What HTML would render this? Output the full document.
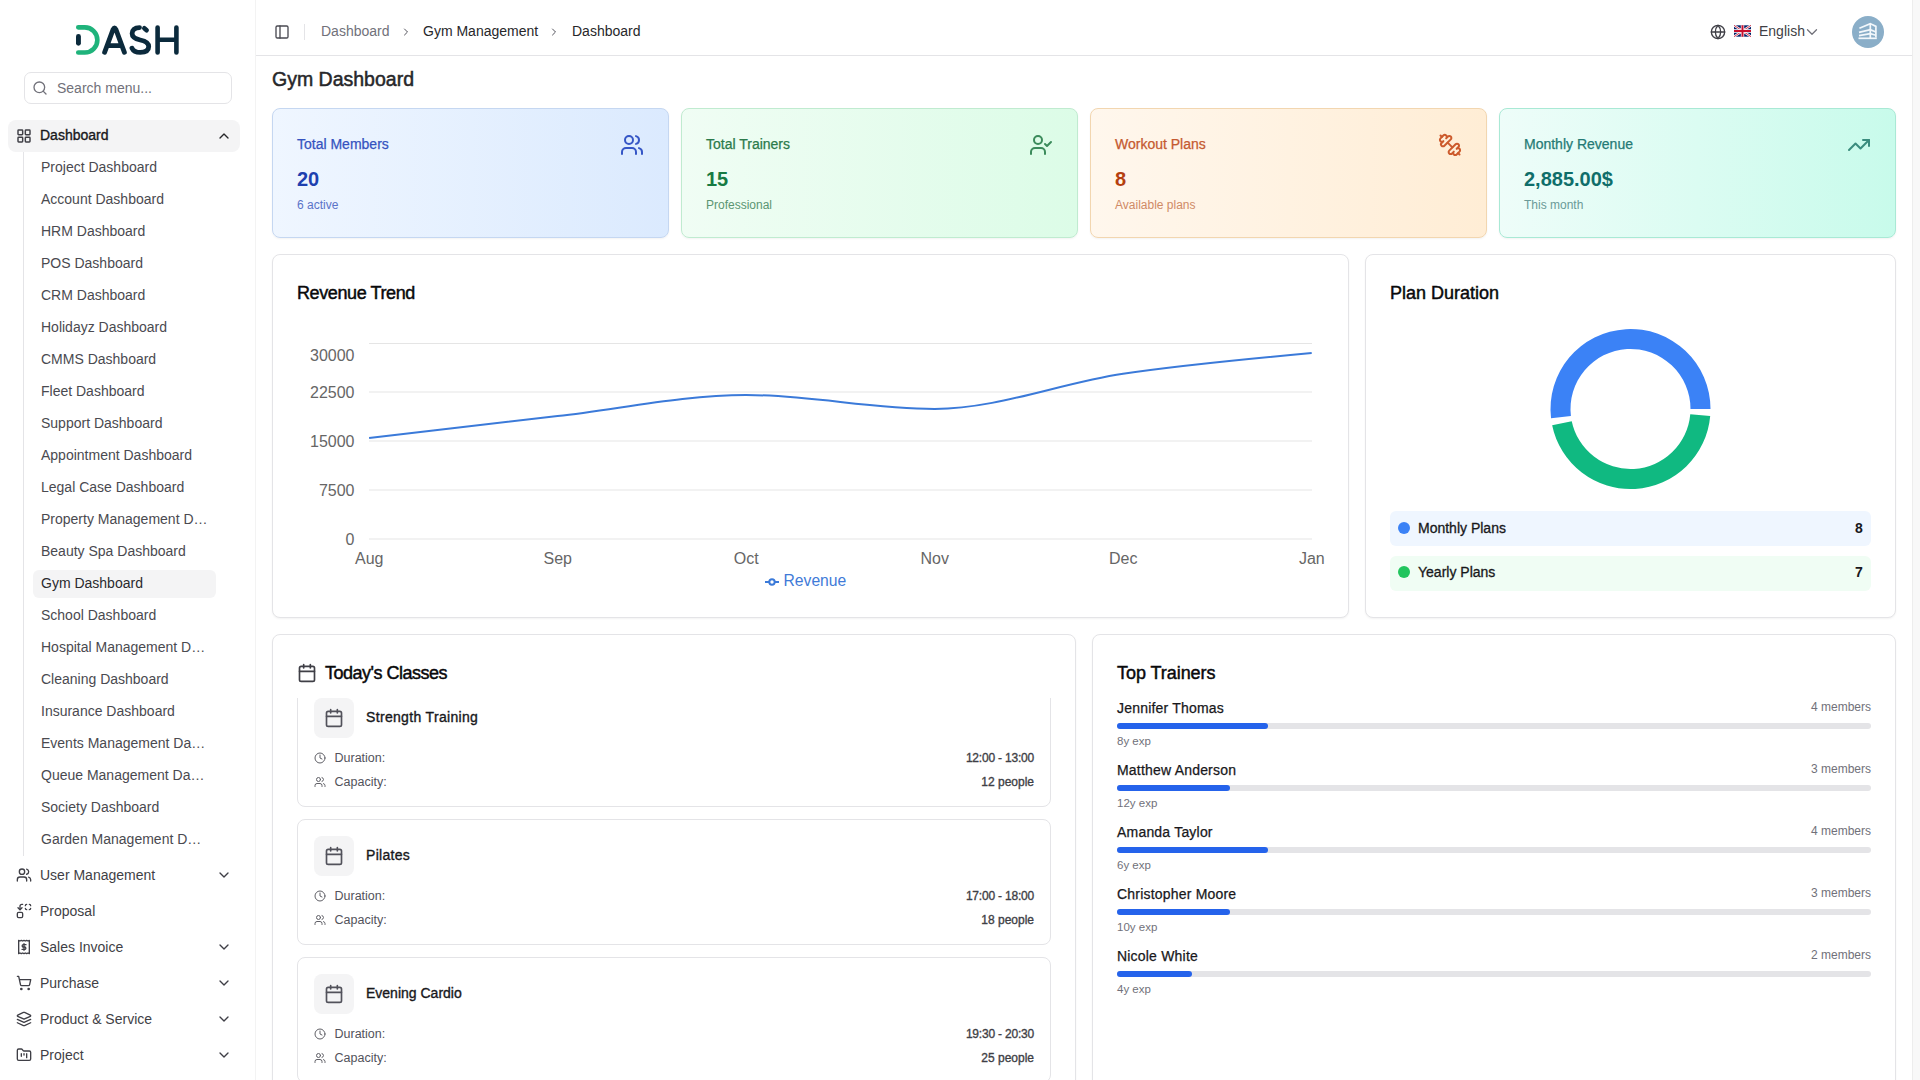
<!DOCTYPE html>
<html>
<head>
<meta charset="utf-8">
<style>
*{box-sizing:border-box;margin:0;padding:0}
html,body{width:1920px;height:1080px;overflow:hidden;background:#f8f8f8;font-family:"Liberation Sans",sans-serif;color:#27272a}
.abs{position:absolute}
svg{display:block}
#sidebar{position:absolute;left:0;top:0;width:255px;height:1080px;background:#ffffff}
#main{position:absolute;left:256px;top:0;width:1656px;height:1080px;background:#ffffff;overflow:hidden;box-shadow:1px 0 0 #ededed,-1px 0 0 #f3f3f3}
.sub{position:absolute;left:41px;font-size:14px;color:#4a4a50;line-height:16px;white-space:nowrap}
.nav{position:absolute;left:16px;width:216px;height:20px}
.nav .ic{position:absolute;left:0;top:2px}
.nav .tx{position:absolute;left:24px;top:2px;font-size:14px;color:#3f3f46;line-height:16px;white-space:nowrap}
.nav .chev{position:absolute;left:203px;top:4px}
</style>
</head>
<body>
<div id="sidebar">
  <!-- logo -->
  <svg class="abs" style="left:70px;top:20px" width="115" height="40" viewBox="0 0 115 40">
    <path d="M8.25,7.35 L14.8,7.35 A12.55,12.55 0 0 1 14.8,32.45 L8.25,32.45" fill="none" stroke="#1fb37b" stroke-width="4.6" stroke-linecap="round"/>
    <rect x="6" y="14" width="4.9" height="11.7" rx="2.45" fill="#0b2a3c"/>
    <path d="M34.6,32.3 L43.2,9.2 Q44.5,6.5 45.8,9.2 L54.4,32.3 M37.4,25.6 L51.6,25.6" fill="none" stroke="#0b2a3c" stroke-width="4.8" stroke-linecap="round" stroke-linejoin="round"/>
    <path d="M69.5,7.6 C64.5,7.6 62.1,10.2 62.1,13.6 C62.1,17.6 65.5,19 70.2,20 C75.2,21 78.7,22.6 78.7,26.6 C78.7,30.6 75.2,32.4 70.2,32.4 C66.2,32.4 63.2,30.8 62,28.2" fill="none" stroke="#0b2a3c" stroke-width="4.8" stroke-linecap="round"/>
    <path d="M74.3,8.2 L76.6,10.2" fill="none" stroke="#0b2a3c" stroke-width="4.6" stroke-linecap="round"/>
    <path d="M87.6,7.5 L87.6,32.4 M106.4,7.5 L106.4,32.4 M87.6,19.7 L106.4,19.7" fill="none" stroke="#0b2a3c" stroke-width="4.6" stroke-linecap="round"/>
  </svg>
  <!-- search -->
  <div class="abs" style="left:24px;top:72px;width:208px;height:32px;border:1px solid #e4e4e7;border-radius:7px;background:#fff"></div>
  <svg class="abs" style="left:32px;top:80px" width="16" height="16" viewBox="0 0 24 24" fill="none" stroke="#71717a" stroke-width="2" stroke-linecap="round"><circle cx="11" cy="11" r="8"/><path d="m21 21-4.3-4.3"/></svg>
  <div class="abs" style="left:57px;top:80px;font-size:14px;color:#71717a;line-height:16px">Search menu...</div>
  <!-- active dashboard -->
  <div class="abs" style="left:8px;top:120px;width:232px;height:32px;background:#f4f4f5;border-radius:8px"></div>
  <svg class="abs" style="left:16px;top:128px" width="16" height="16" viewBox="0 0 24 24" fill="none" stroke="#3f3f46" stroke-width="2.2" stroke-linejoin="round"><rect x="3" y="3" width="7" height="7" rx="1"/><rect x="14" y="3" width="7" height="7" rx="1"/><rect x="14" y="14" width="7" height="7" rx="1"/><rect x="3" y="14" width="7" height="7" rx="1"/></svg>
  <div class="abs" style="left:40px;top:127px;font-size:14px;color:#18181b;line-height:16px;-webkit-text-stroke:0.35px #18181b">Dashboard</div>
  <svg class="abs" style="left:216px;top:128px" width="16" height="16" viewBox="0 0 24 24" fill="none" stroke="#27272a" stroke-width="2" stroke-linecap="round" stroke-linejoin="round"><path d="m18 15-6-6-6 6"/></svg>
  <!-- tree line -->
  <div class="abs" style="left:23px;top:152px;width:1px;height:704px;background:#e4e4e7"></div>
  <!-- active gym -->
  <div class="abs" style="left:33px;top:570px;width:183px;height:28px;background:#f4f4f5;border-radius:6px"></div>
  <div class="sub" style="top:159px">Project Dashboard</div>
  <div class="sub" style="top:191px">Account Dashboard</div>
  <div class="sub" style="top:223px">HRM Dashboard</div>
  <div class="sub" style="top:255px">POS Dashboard</div>
  <div class="sub" style="top:287px">CRM Dashboard</div>
  <div class="sub" style="top:319px">Holidayz Dashboard</div>
  <div class="sub" style="top:351px">CMMS Dashboard</div>
  <div class="sub" style="top:383px">Fleet Dashboard</div>
  <div class="sub" style="top:415px">Support Dashboard</div>
  <div class="sub" style="top:447px">Appointment Dashboard</div>
  <div class="sub" style="top:479px">Legal Case Dashboard</div>
  <div class="sub" style="top:511px;width:167px;overflow:hidden;text-overflow:ellipsis">Property Management Dashboard</div>
  <div class="sub" style="top:543px">Beauty Spa Dashboard</div>
  <div class="sub" style="top:575px;color:#2a2a2e">Gym Dashboard</div>
  <div class="sub" style="top:607px">School Dashboard</div>
  <div class="sub" style="top:639px;width:167px;overflow:hidden;text-overflow:ellipsis">Hospital Management Dashboard</div>
  <div class="sub" style="top:671px">Cleaning Dashboard</div>
  <div class="sub" style="top:703px">Insurance Dashboard</div>
  <div class="sub" style="top:735px;width:167px;overflow:hidden;text-overflow:ellipsis">Events Management Dashboard</div>
  <div class="sub" style="top:767px;width:167px;overflow:hidden;text-overflow:ellipsis">Queue Management Dashboard</div>
  <div class="sub" style="top:799px">Society Dashboard</div>
  <div class="sub" style="top:831px;width:167px;overflow:hidden;text-overflow:ellipsis">Garden Management Dashboard</div>
  <!-- NAV -->
  <svg class="abs" style="left:16px;top:867px" width="16" height="16" viewBox="0 0 24 24" fill="none" stroke="#3f3f46" stroke-width="2" stroke-linecap="round" stroke-linejoin="round"><path d="M16 21v-2a4 4 0 0 0-4-4H6a4 4 0 0 0-4 4v2"/><circle cx="9" cy="7" r="4"/><path d="M22 21v-2a4 4 0 0 0-3-3.87"/><path d="M16 3.13a4 4 0 0 1 0 7.75"/></svg>
  <div class="abs" style="left:40px;top:867px;font-size:14px;color:#3f3f46;line-height:16px;white-space:nowrap">User Management</div>
  <svg class="abs" style="left:216px;top:867px" width="16" height="16" viewBox="0 0 24 24" fill="none" stroke="#3f3f46" stroke-width="2" stroke-linecap="round" stroke-linejoin="round"><path d="m6 9 6 6 6-6"/></svg>
  <svg class="abs" style="left:16px;top:903px" width="16" height="16" viewBox="0 0 24 24" fill="none" stroke="#3f3f46" stroke-width="2" stroke-linecap="round" stroke-linejoin="round"><path d="M14 4a2 2 0 0 1 2-2"/><path d="M16 10a2 2 0 0 1-2-2"/><path d="M20 2a2 2 0 0 1 2 2"/><path d="M22 8a2 2 0 0 1-2 2"/><path d="m3 7 3 3 3-3"/><path d="M6 10V5a3 3 0 0 1 3-3h1"/><rect x="2" y="14" width="8" height="8" rx="2"/></svg>
  <div class="abs" style="left:40px;top:903px;font-size:14px;color:#3f3f46;line-height:16px;white-space:nowrap">Proposal</div>
  <svg class="abs" style="left:16px;top:939px" width="16" height="16" viewBox="0 0 24 24" fill="none" stroke="#3f3f46" stroke-width="2" stroke-linecap="round" stroke-linejoin="round"><path d="M4 2v20l2-1 2 1 2-1 2 1 2-1 2 1 2-1 2 1V2l-2 1-2-1-2 1-2-1-2 1-2-1-2 1Z" /><path d="M15 8.5h-4a1.75 1.75 0 0 0 0 3.5h2a1.75 1.75 0 0 1 0 3.5H9"/><path d="M12 17V7"/></svg>
  <div class="abs" style="left:40px;top:939px;font-size:14px;color:#3f3f46;line-height:16px;white-space:nowrap">Sales Invoice</div>
  <svg class="abs" style="left:216px;top:939px" width="16" height="16" viewBox="0 0 24 24" fill="none" stroke="#3f3f46" stroke-width="2" stroke-linecap="round" stroke-linejoin="round"><path d="m6 9 6 6 6-6"/></svg>
  <svg class="abs" style="left:16px;top:975px" width="16" height="16" viewBox="0 0 24 24" fill="none" stroke="#3f3f46" stroke-width="2" stroke-linecap="round" stroke-linejoin="round"><circle cx="8" cy="21" r="1"/><circle cx="19" cy="21" r="1"/><path d="M2.05 2.05h2l2.66 12.42a2 2 0 0 0 2 1.58h9.78a2 2 0 0 0 1.95-1.57l1.65-7.43H5.12"/></svg>
  <div class="abs" style="left:40px;top:975px;font-size:14px;color:#3f3f46;line-height:16px;white-space:nowrap">Purchase</div>
  <svg class="abs" style="left:216px;top:975px" width="16" height="16" viewBox="0 0 24 24" fill="none" stroke="#3f3f46" stroke-width="2" stroke-linecap="round" stroke-linejoin="round"><path d="m6 9 6 6 6-6"/></svg>
  <svg class="abs" style="left:16px;top:1011px" width="16" height="16" viewBox="0 0 24 24" fill="none" stroke="#3f3f46" stroke-width="2" stroke-linecap="round" stroke-linejoin="round"><path d="m12.83 2.18a2 2 0 0 0-1.66 0L2.6 6.08a1 1 0 0 0 0 1.83l8.58 3.91a2 2 0 0 0 1.66 0l8.58-3.9a1 1 0 0 0 0-1.83Z"/><path d="m22 17.65-9.17 4.16a2 2 0 0 1-1.66 0L2 17.65"/><path d="m22 12.65-9.17 4.16a2 2 0 0 1-1.66 0L2 12.65"/></svg>
  <div class="abs" style="left:40px;top:1011px;font-size:14px;color:#3f3f46;line-height:16px;white-space:nowrap">Product &amp; Service</div>
  <svg class="abs" style="left:216px;top:1011px" width="16" height="16" viewBox="0 0 24 24" fill="none" stroke="#3f3f46" stroke-width="2" stroke-linecap="round" stroke-linejoin="round"><path d="m6 9 6 6 6-6"/></svg>
  <svg class="abs" style="left:16px;top:1047px" width="16" height="16" viewBox="0 0 24 24" fill="none" stroke="#3f3f46" stroke-width="2" stroke-linecap="round" stroke-linejoin="round"><path d="M4 20h16a2 2 0 0 0 2-2V8a2 2 0 0 0-2-2h-7.93a2 2 0 0 1-1.66-.9l-.82-1.2A2 2 0 0 0 7.93 3H4a2 2 0 0 0-2 2v13c0 1.1.9 2 2 2Z"/><path d="M8 10v4"/><path d="M12 10v2"/><path d="M16 10v6"/></svg>
  <div class="abs" style="left:40px;top:1047px;font-size:14px;color:#3f3f46;line-height:16px;white-space:nowrap">Project</div>
  <svg class="abs" style="left:216px;top:1047px" width="16" height="16" viewBox="0 0 24 24" fill="none" stroke="#3f3f46" stroke-width="2" stroke-linecap="round" stroke-linejoin="round"><path d="m6 9 6 6 6-6"/></svg>
</div>
<div id="main">
  <!-- MAIN -->
</div>
<div class="abs" style="left:256px;top:55px;width:1656px;height:1px;background:#e4e4e7"></div>
<svg class="abs" style="left:274px;top:24px" width="16" height="16" viewBox="0 0 24 24" fill="none" stroke="#4a4a52" stroke-width="2" stroke-linecap="round" stroke-linejoin="round"><rect width="18" height="18" x="3" y="3" rx="2"/><path d="M9 3v18"/></svg>
<div class="abs" style="left:304px;top:24px;width:1px;height:16px;background:#e4e4e7"></div>
<div class="abs" style="left:321px;top:23px;font-size:14px;color:#71717a;line-height:16px;white-space:nowrap">Dashboard</div>
<svg class="abs" style="left:400px;top:26px" width="12" height="12" viewBox="0 0 24 24" fill="none" stroke="#52525b" stroke-width="2" stroke-linecap="round" stroke-linejoin="round"><path d="m9 18 6-6-6-6"/></svg>
<div class="abs" style="left:423px;top:23px;font-size:14px;color:#27272a;line-height:16px;white-space:nowrap">Gym Management</div>
<svg class="abs" style="left:548px;top:26px" width="12" height="12" viewBox="0 0 24 24" fill="none" stroke="#52525b" stroke-width="2" stroke-linecap="round" stroke-linejoin="round"><path d="m9 18 6-6-6-6"/></svg>
<div class="abs" style="left:572px;top:23px;font-size:14px;color:#27272a;line-height:16px;white-space:nowrap">Dashboard</div>
<svg class="abs" style="left:1710px;top:24px" width="16" height="16" viewBox="0 0 24 24" fill="none" stroke="#3f3f46" stroke-width="2" stroke-linecap="round" stroke-linejoin="round"><circle cx="12" cy="12" r="10"/><path d="M12 2a14.5 14.5 0 0 0 0 20 14.5 14.5 0 0 0 0-20"/><path d="M2 12h20"/></svg>
<svg class="abs" style="left:1734px;top:25px" width="17" height="12" viewBox="0 0 60 40"><rect width="60" height="40" fill="#012169"/><path d="M0,0 L60,40 M60,0 L0,40" stroke="#fff" stroke-width="8"/><path d="M0,0 L60,40 M60,0 L0,40" stroke="#C8102E" stroke-width="3"/><path d="M30,0 V40 M0,20 H60" stroke="#fff" stroke-width="12"/><path d="M30,0 V40 M0,20 H60" stroke="#C8102E" stroke-width="7"/></svg>
<div class="abs" style="left:1759px;top:23px;font-size:14px;color:#3f3f46;line-height:16px;white-space:nowrap">English</div>
<svg class="abs" style="left:1803px;top:23px" width="18" height="18" viewBox="0 0 24 24" fill="none" stroke="#71717a" stroke-width="1.7" stroke-linecap="round" stroke-linejoin="round"><path d="m6 9 6 6 6-6"/></svg>
<div class="abs" style="left:1852px;top:16px;width:32px;height:32px;border-radius:16px;background:#8aaec8"></div>
<svg class="abs" style="left:1852px;top:16px" width="32" height="32" viewBox="1852 16 32 32" fill="none" stroke="#f2f7fb" stroke-width="1.7" stroke-linecap="butt"><path d="M1859.4,28.3 L1870.3,23.6 L1875.9,26.4 L1875.9,37.6"/><path d="M1859,32.4 L1870.3,29.6 L1875.9,32"/><path d="M1859,35.6 L1870.3,33.6 L1875.9,35.2"/><path d="M1858.5,38.3 L1876.8,38.3"/><path d="M1870.3,23.6 L1870.3,38"/></svg>
<div class="abs" style="left:272px;top:67px;font-size:19.5px;color:#27272a;line-height:24px;white-space:nowrap;-webkit-text-stroke:0.5px #27272a">Gym Dashboard</div>
<!-- CARDS -->
<div class="abs" style="left:272px;top:108px;width:397px;height:130px;border:1px solid #c5d7f1;border-radius:8px;box-shadow:0 1px 2px rgba(0,0,0,0.05);background:linear-gradient(to right,#eff6ff,#dbeafe)"></div>
<div class="abs" style="left:297px;top:136px;font-size:14px;color:#3553c0;line-height:16px;white-space:nowrap;-webkit-text-stroke:0.25px #3553c0">Total Members</div>
<div class="abs" style="left:297px;top:167px;font-size:20px;font-weight:bold;color:#1e40af;line-height:24px;white-space:nowrap">20</div>
<div class="abs" style="left:297px;top:198px;font-size:12px;color:#5b73c8;line-height:14px;white-space:nowrap">6 active</div>
<svg class="abs" style="left:620px;top:133px" width="24" height="24" viewBox="0 0 24 24" fill="none" stroke="#3556c6" stroke-width="2" stroke-linecap="round" stroke-linejoin="round"><path d="M16 21v-2a4 4 0 0 0-4-4H6a4 4 0 0 0-4 4v2"/><circle cx="9" cy="7" r="4"/><path d="M22 21v-2a4 4 0 0 0-3-3.87"/><path d="M16 3.13a4 4 0 0 1 0 7.75"/></svg>
<div class="abs" style="left:681px;top:108px;width:397px;height:130px;border:1px solid #c0ebd0;border-radius:8px;box-shadow:0 1px 2px rgba(0,0,0,0.05);background:linear-gradient(to right,#f0fdf4,#dcfce7)"></div>
<div class="abs" style="left:706px;top:136px;font-size:14px;color:#2b7a4b;line-height:16px;white-space:nowrap;-webkit-text-stroke:0.25px #2b7a4b">Total Trainers</div>
<div class="abs" style="left:706px;top:167px;font-size:20px;font-weight:bold;color:#177a43;line-height:24px;white-space:nowrap">15</div>
<div class="abs" style="left:706px;top:198px;font-size:12px;color:#5b9572;line-height:14px;white-space:nowrap">Professional</div>
<svg class="abs" style="left:1029px;top:133px" width="24" height="24" viewBox="0 0 24 24" fill="none" stroke="#3b8b5b" stroke-width="2" stroke-linecap="round" stroke-linejoin="round"><path d="M16 21v-2a4 4 0 0 0-4-4H6a4 4 0 0 0-4 4v2"/><circle cx="9" cy="7" r="4"/><polyline points="16 11 18 13 22 9"/></svg>
<div class="abs" style="left:1090px;top:108px;width:397px;height:130px;border:1px solid #f2d6b0;border-radius:8px;box-shadow:0 1px 2px rgba(0,0,0,0.05);background:linear-gradient(to right,#fff7ed,#ffedd5)"></div>
<div class="abs" style="left:1115px;top:136px;font-size:14px;color:#c55a30;line-height:16px;white-space:nowrap;-webkit-text-stroke:0.25px #c55a30">Workout Plans</div>
<div class="abs" style="left:1115px;top:167px;font-size:20px;font-weight:bold;color:#b5400f;line-height:24px;white-space:nowrap">8</div>
<div class="abs" style="left:1115px;top:198px;font-size:12px;color:#cf8a66;line-height:14px;white-space:nowrap">Available plans</div>
<svg class="abs" style="left:1438px;top:133px" width="24" height="24" viewBox="0 0 24 24" fill="none" stroke="#cc5a2c" stroke-width="2" stroke-linecap="round" stroke-linejoin="round"><path d="M14.4 14.4 9.6 9.6"/><path d="M18.657 21.485a2 2 0 1 1-2.829-2.828l-1.767 1.768a2 2 0 1 1-2.829-2.829l6.364-6.364a2 2 0 1 1 2.829 2.829l-1.768 1.767a2 2 0 1 1 2.828 2.829z"/><path d="m21.5 21.5-1.4-1.4"/><path d="M3.9 3.9 2.5 2.5"/><path d="M6.404 12.768a2 2 0 1 1-2.829-2.829l1.768-1.767a2 2 0 1 1-2.828-2.829l2.828-2.828a2 2 0 1 1 2.829 2.828l1.767-1.768a2 2 0 1 1 2.829 2.829z"/></svg>
<div class="abs" style="left:1499px;top:108px;width:397px;height:130px;border:1px solid #a9e9d5;border-radius:8px;box-shadow:0 1px 2px rgba(0,0,0,0.05);background:linear-gradient(to right,#eefdf9,#c8fbeb)"></div>
<div class="abs" style="left:1524px;top:136px;font-size:14px;color:#257a75;line-height:16px;white-space:nowrap;-webkit-text-stroke:0.25px #257a75">Monthly Revenue</div>
<div class="abs" style="left:1524px;top:167px;font-size:20px;font-weight:bold;color:#0f6e6a;line-height:24px;white-space:nowrap">2,885.00$</div>
<div class="abs" style="left:1524px;top:198px;font-size:12px;color:#6a9a97;line-height:14px;white-space:nowrap">This month</div>
<svg class="abs" style="left:1847px;top:133px" width="24" height="24" viewBox="0 0 24 24" fill="none" stroke="#3a8c7e" stroke-width="2" stroke-linecap="round" stroke-linejoin="round"><polyline points="22 7 13.5 15.5 8.5 10.5 2 17"/><polyline points="16 7 22 7 22 13"/></svg>
<!-- CHARTS -->
<div class="abs" style="left:272px;top:254px;width:1077px;height:364px;border:1px solid #e4e4e7;border-radius:8px;background:#fff;box-shadow:0 1px 2px rgba(0,0,0,0.05)"></div>
<div class="abs" style="left:1365px;top:254px;width:531px;height:364px;border:1px solid #e4e4e7;border-radius:8px;background:#fff;box-shadow:0 1px 2px rgba(0,0,0,0.05)"></div>
<div class="abs" style="left:297px;top:282px;font-size:18px;color:#09090b;line-height:22px;white-space:nowrap;letter-spacing:-0.4px;-webkit-text-stroke:0.45px #09090b">Revenue Trend</div>
<div class="abs" style="left:1390px;top:282px;font-size:18px;color:#09090b;line-height:22px;white-space:nowrap;letter-spacing:0px;-webkit-text-stroke:0.45px #09090b">Plan Duration</div>
<svg class="abs" style="left:0;top:0" width="1920" height="1080" viewBox="0 0 1920 1080">
<line x1="369" y1="343.5" x2="1312" y2="343.5" stroke="#e5e5e5" stroke-width="1.2"/>
<line x1="369" y1="392" x2="1312" y2="392" stroke="#e5e5e5" stroke-width="1.2"/>
<line x1="369" y1="441" x2="1312" y2="441" stroke="#e5e5e5" stroke-width="1.2"/>
<line x1="369" y1="490" x2="1312" y2="490" stroke="#e5e5e5" stroke-width="1.2"/>
<line x1="369" y1="539" x2="1312" y2="539" stroke="#e5e5e5" stroke-width="1.2"/>
<path d="M369.1,438.0C431.9,430.6,494.8,423.3,557.6,416.1C620.4,408.9,683.3,395.0,746.1,395.0C808.9,395.0,871.8,408.9,934.6,408.9C997.4,408.9,1060.3,383.0,1123.1,373.7C1186.0,364.4,1248.8,358.7,1311.7,353.0" fill="none" stroke="#3b7ad9" stroke-width="2"/>
<text x="354.5" y="361.3" text-anchor="end" font-family="Liberation Sans" font-size="16" fill="#666666">30000</text>
<text x="354.5" y="398.2" text-anchor="end" font-family="Liberation Sans" font-size="16" fill="#666666">22500</text>
<text x="354.5" y="447.2" text-anchor="end" font-family="Liberation Sans" font-size="16" fill="#666666">15000</text>
<text x="354.5" y="496.2" text-anchor="end" font-family="Liberation Sans" font-size="16" fill="#666666">7500</text>
<text x="354.5" y="545.3" text-anchor="end" font-family="Liberation Sans" font-size="16" fill="#666666">0</text>
<text x="369.2" y="563.5" text-anchor="middle" font-family="Liberation Sans" font-size="16" fill="#666666">Aug</text>
<text x="557.72" y="563.5" text-anchor="middle" font-family="Liberation Sans" font-size="16" fill="#666666">Sep</text>
<text x="746.24" y="563.5" text-anchor="middle" font-family="Liberation Sans" font-size="16" fill="#666666">Oct</text>
<text x="934.76" y="563.5" text-anchor="middle" font-family="Liberation Sans" font-size="16" fill="#666666">Nov</text>
<text x="1123.28" y="563.5" text-anchor="middle" font-family="Liberation Sans" font-size="16" fill="#666666">Dec</text>
<text x="1311.8" y="563.5" text-anchor="middle" font-family="Liberation Sans" font-size="16" fill="#666666">Jan</text>
<line x1="765" y1="582" x2="779" y2="582" stroke="#3b7ad9" stroke-width="2"/><circle cx="772" cy="582" r="2.7" fill="#fff" stroke="#3b7ad9" stroke-width="2"/>
<text x="783.5" y="585.6" font-family="Liberation Sans" font-size="15.7" fill="#3f7bd8">Revenue</text>
<path d="M1710.50,409.00A80,80 0 1 0 1551.04,418.29L1570.91,415.97A60,60 0 1 1 1690.50,409.00Z" fill="#3b82f6"/>
<path d="M1552.15,425.18A80,80 0 0 0 1710.20,415.97L1690.27,414.23A60,60 0 0 1 1571.74,421.14Z" fill="#10b981"/>
</svg>
<div class="abs" style="left:1390px;top:511px;width:481px;height:35px;border-radius:6px;background:#eff6ff"></div>
<div class="abs" style="left:1398px;top:522px;width:12px;height:12px;border-radius:6px;background:#3b82f6"></div>
<div class="abs" style="left:1418px;top:519.5px;font-size:14px;color:#18181b;line-height:16px;white-space:nowrap;-webkit-text-stroke:0.3px #18181b">Monthly Plans</div>
<div class="abs" style="left:1855px;top:519.5px;font-size:14px;font-weight:bold;color:#18181b;line-height:16px;white-space:nowrap">8</div>
<div class="abs" style="left:1390px;top:556px;width:481px;height:35px;border-radius:6px;background:#f0fdf4"></div>
<div class="abs" style="left:1398px;top:566px;width:12px;height:12px;border-radius:6px;background:#22c55e"></div>
<div class="abs" style="left:1418px;top:563.5px;font-size:14px;color:#18181b;line-height:16px;white-space:nowrap;-webkit-text-stroke:0.3px #18181b">Yearly Plans</div>
<div class="abs" style="left:1855px;top:563.5px;font-size:14px;font-weight:bold;color:#18181b;line-height:16px;white-space:nowrap">7</div>
<!-- BOTTOM -->
<div class="abs" style="left:272px;top:634px;width:804px;height:500px;border:1px solid #e4e4e7;border-radius:8px;background:#fff;box-shadow:0 1px 2px rgba(0,0,0,0.05)"></div>
<div class="abs" style="left:1092px;top:634px;width:804px;height:500px;border:1px solid #e4e4e7;border-radius:8px;background:#fff;box-shadow:0 1px 2px rgba(0,0,0,0.05)"></div>
<svg class="abs" style="left:297px;top:663px" width="20" height="20" viewBox="0 0 24 24" fill="none" stroke="#3f3f46" stroke-width="2" stroke-linecap="round" stroke-linejoin="round"><path d="M8 2v4"/><path d="M16 2v4"/><rect width="18" height="18" x="3" y="4" rx="2"/><path d="M3 10h18"/></svg>
<div class="abs" style="left:325px;top:662.36px;font-size:18px;color:#09090b;line-height:22px;white-space:nowrap;letter-spacing:-0.5px;-webkit-text-stroke:0.45px #09090b">Today's Classes</div>
<div class="abs" style="left:1117px;top:662.36px;font-size:18px;color:#09090b;line-height:22px;white-space:nowrap;letter-spacing:-0.05px;-webkit-text-stroke:0.45px #09090b">Top Trainers</div>
<div class="abs" style="left:297px;top:698px;width:760px;height:382px;overflow:hidden">
<div class="abs" style="left:0px;top:-17px;width:754px;height:126px;border:1px solid #e4e4e7;border-radius:8px;background:#fff"></div>
<div class="abs" style="left:17px;top:0px;width:40px;height:40px;border-radius:8px;background:#f4f4f5"></div>
<svg class="abs" style="left:27px;top:10px" width="20" height="20" viewBox="0 0 24 24" fill="none" stroke="#52525b" stroke-width="2" stroke-linecap="round" stroke-linejoin="round"><path d="M8 2v4"/><path d="M16 2v4"/><rect width="18" height="18" x="3" y="4" rx="2"/><path d="M3 10h18"/></svg>
<div class="abs" style="left:69px;top:11.049999999999955px;font-size:14px;color:#18181b;line-height:16px;white-space:nowrap;letter-spacing:0.33px;-webkit-text-stroke:0.35px #18181b">Strength Training</div>
<svg class="abs" style="left:17px;top:54px" width="12" height="12" viewBox="0 0 24 24" fill="none" stroke="#5f5f66" stroke-width="2" stroke-linecap="round" stroke-linejoin="round"><circle cx="12" cy="12" r="10"/><polyline points="12 6 12 12 16 14"/></svg>
<div class="abs" style="left:37.5px;top:53.17px;font-size:12.5px;color:#52525b;line-height:15px;white-space:nowrap">Duration:</div>
<div class="abs" style="left:337px;width:400px;text-align:right;top:53.34px;font-size:12px;color:#3f3f46;line-height:15px;white-space:nowrap;letter-spacing:-0.2px;-webkit-text-stroke:0.35px #3f3f46">12:00 - 13:00</div>
<svg class="abs" style="left:17px;top:78px" width="12" height="12" viewBox="0 0 24 24" fill="none" stroke="#5f5f66" stroke-width="2" stroke-linecap="round" stroke-linejoin="round"><path d="M16 21v-2a4 4 0 0 0-4-4H6a4 4 0 0 0-4 4v2"/><circle cx="9" cy="7" r="4"/><path d="M22 21v-2a4 4 0 0 0-3-3.87"/><path d="M16 3.13a4 4 0 0 1 0 7.75"/></svg>
<div class="abs" style="left:37.5px;top:76.97px;font-size:12.5px;color:#52525b;line-height:15px;white-space:nowrap">Capacity:</div>
<div class="abs" style="left:337px;width:400px;text-align:right;top:77.14px;font-size:12px;color:#3f3f46;line-height:15px;white-space:nowrap;letter-spacing:0px;-webkit-text-stroke:0.35px #3f3f46">12 people</div>
<div class="abs" style="left:0px;top:121px;width:754px;height:126px;border:1px solid #e4e4e7;border-radius:8px;background:#fff"></div>
<div class="abs" style="left:17px;top:138px;width:40px;height:40px;border-radius:8px;background:#f4f4f5"></div>
<svg class="abs" style="left:27px;top:148px" width="20" height="20" viewBox="0 0 24 24" fill="none" stroke="#52525b" stroke-width="2" stroke-linecap="round" stroke-linejoin="round"><path d="M8 2v4"/><path d="M16 2v4"/><rect width="18" height="18" x="3" y="4" rx="2"/><path d="M3 10h18"/></svg>
<div class="abs" style="left:69px;top:149.04999999999995px;font-size:14px;color:#18181b;line-height:16px;white-space:nowrap;letter-spacing:0.3px;-webkit-text-stroke:0.35px #18181b">Pilates</div>
<svg class="abs" style="left:17px;top:192px" width="12" height="12" viewBox="0 0 24 24" fill="none" stroke="#5f5f66" stroke-width="2" stroke-linecap="round" stroke-linejoin="round"><circle cx="12" cy="12" r="10"/><polyline points="12 6 12 12 16 14"/></svg>
<div class="abs" style="left:37.5px;top:191.17px;font-size:12.5px;color:#52525b;line-height:15px;white-space:nowrap">Duration:</div>
<div class="abs" style="left:337px;width:400px;text-align:right;top:191.34px;font-size:12px;color:#3f3f46;line-height:15px;white-space:nowrap;letter-spacing:-0.2px;-webkit-text-stroke:0.35px #3f3f46">17:00 - 18:00</div>
<svg class="abs" style="left:17px;top:216px" width="12" height="12" viewBox="0 0 24 24" fill="none" stroke="#5f5f66" stroke-width="2" stroke-linecap="round" stroke-linejoin="round"><path d="M16 21v-2a4 4 0 0 0-4-4H6a4 4 0 0 0-4 4v2"/><circle cx="9" cy="7" r="4"/><path d="M22 21v-2a4 4 0 0 0-3-3.87"/><path d="M16 3.13a4 4 0 0 1 0 7.75"/></svg>
<div class="abs" style="left:37.5px;top:214.97px;font-size:12.5px;color:#52525b;line-height:15px;white-space:nowrap">Capacity:</div>
<div class="abs" style="left:337px;width:400px;text-align:right;top:215.14px;font-size:12px;color:#3f3f46;line-height:15px;white-space:nowrap;letter-spacing:0px;-webkit-text-stroke:0.35px #3f3f46">18 people</div>
<div class="abs" style="left:0px;top:259px;width:754px;height:126px;border:1px solid #e4e4e7;border-radius:8px;background:#fff"></div>
<div class="abs" style="left:17px;top:276px;width:40px;height:40px;border-radius:8px;background:#f4f4f5"></div>
<svg class="abs" style="left:27px;top:286px" width="20" height="20" viewBox="0 0 24 24" fill="none" stroke="#52525b" stroke-width="2" stroke-linecap="round" stroke-linejoin="round"><path d="M8 2v4"/><path d="M16 2v4"/><rect width="18" height="18" x="3" y="4" rx="2"/><path d="M3 10h18"/></svg>
<div class="abs" style="left:69px;top:287.04999999999995px;font-size:14px;color:#18181b;line-height:16px;white-space:nowrap;letter-spacing:0px;-webkit-text-stroke:0.35px #18181b">Evening Cardio</div>
<svg class="abs" style="left:17px;top:330px" width="12" height="12" viewBox="0 0 24 24" fill="none" stroke="#5f5f66" stroke-width="2" stroke-linecap="round" stroke-linejoin="round"><circle cx="12" cy="12" r="10"/><polyline points="12 6 12 12 16 14"/></svg>
<div class="abs" style="left:37.5px;top:329.17px;font-size:12.5px;color:#52525b;line-height:15px;white-space:nowrap">Duration:</div>
<div class="abs" style="left:337px;width:400px;text-align:right;top:329.34px;font-size:12px;color:#3f3f46;line-height:15px;white-space:nowrap;letter-spacing:-0.2px;-webkit-text-stroke:0.35px #3f3f46">19:30 - 20:30</div>
<svg class="abs" style="left:17px;top:354px" width="12" height="12" viewBox="0 0 24 24" fill="none" stroke="#5f5f66" stroke-width="2" stroke-linecap="round" stroke-linejoin="round"><path d="M16 21v-2a4 4 0 0 0-4-4H6a4 4 0 0 0-4 4v2"/><circle cx="9" cy="7" r="4"/><path d="M22 21v-2a4 4 0 0 0-3-3.87"/><path d="M16 3.13a4 4 0 0 1 0 7.75"/></svg>
<div class="abs" style="left:37.5px;top:352.97px;font-size:12.5px;color:#52525b;line-height:15px;white-space:nowrap">Capacity:</div>
<div class="abs" style="left:337px;width:400px;text-align:right;top:353.14px;font-size:12px;color:#3f3f46;line-height:15px;white-space:nowrap;letter-spacing:0px;-webkit-text-stroke:0.35px #3f3f46">25 people</div>
</div>
<div class="abs" style="left:1117px;top:699.95px;font-size:14px;color:#18181b;line-height:16px;white-space:nowrap;letter-spacing:0.2px;-webkit-text-stroke:0.25px #18181b">Jennifer Thomas</div>
<div class="abs" style="left:1671px;width:200px;text-align:right;top:699.94px;font-size:12px;color:#71717a;line-height:14px;white-space:nowrap">4 members</div>
<div class="abs" style="left:1117px;top:722.8px;width:754px;height:6px;border-radius:3px;background:#e4e4e7"></div>
<div class="abs" style="left:1117px;top:722.8px;width:150.8px;height:6px;border-radius:3px;background:#2563eb"></div>
<div class="abs" style="left:1117px;top:733.82px;font-size:11.5px;color:#71717a;line-height:14px;white-space:nowrap">8y exp</div>
<div class="abs" style="left:1117px;top:761.95px;font-size:14px;color:#18181b;line-height:16px;white-space:nowrap;letter-spacing:0.2px;-webkit-text-stroke:0.25px #18181b">Matthew Anderson</div>
<div class="abs" style="left:1671px;width:200px;text-align:right;top:761.94px;font-size:12px;color:#71717a;line-height:14px;white-space:nowrap">3 members</div>
<div class="abs" style="left:1117px;top:784.8px;width:754px;height:6px;border-radius:3px;background:#e4e4e7"></div>
<div class="abs" style="left:1117px;top:784.8px;width:113.1px;height:6px;border-radius:3px;background:#2563eb"></div>
<div class="abs" style="left:1117px;top:795.82px;font-size:11.5px;color:#71717a;line-height:14px;white-space:nowrap">12y exp</div>
<div class="abs" style="left:1117px;top:823.95px;font-size:14px;color:#18181b;line-height:16px;white-space:nowrap;letter-spacing:0.2px;-webkit-text-stroke:0.25px #18181b">Amanda Taylor</div>
<div class="abs" style="left:1671px;width:200px;text-align:right;top:823.94px;font-size:12px;color:#71717a;line-height:14px;white-space:nowrap">4 members</div>
<div class="abs" style="left:1117px;top:846.8px;width:754px;height:6px;border-radius:3px;background:#e4e4e7"></div>
<div class="abs" style="left:1117px;top:846.8px;width:150.8px;height:6px;border-radius:3px;background:#2563eb"></div>
<div class="abs" style="left:1117px;top:857.82px;font-size:11.5px;color:#71717a;line-height:14px;white-space:nowrap">6y exp</div>
<div class="abs" style="left:1117px;top:885.95px;font-size:14px;color:#18181b;line-height:16px;white-space:nowrap;letter-spacing:0.2px;-webkit-text-stroke:0.25px #18181b">Christopher Moore</div>
<div class="abs" style="left:1671px;width:200px;text-align:right;top:885.94px;font-size:12px;color:#71717a;line-height:14px;white-space:nowrap">3 members</div>
<div class="abs" style="left:1117px;top:908.8px;width:754px;height:6px;border-radius:3px;background:#e4e4e7"></div>
<div class="abs" style="left:1117px;top:908.8px;width:113.1px;height:6px;border-radius:3px;background:#2563eb"></div>
<div class="abs" style="left:1117px;top:919.82px;font-size:11.5px;color:#71717a;line-height:14px;white-space:nowrap">10y exp</div>
<div class="abs" style="left:1117px;top:947.95px;font-size:14px;color:#18181b;line-height:16px;white-space:nowrap;letter-spacing:0.2px;-webkit-text-stroke:0.25px #18181b">Nicole White</div>
<div class="abs" style="left:1671px;width:200px;text-align:right;top:947.94px;font-size:12px;color:#71717a;line-height:14px;white-space:nowrap">2 members</div>
<div class="abs" style="left:1117px;top:970.8px;width:754px;height:6px;border-radius:3px;background:#e4e4e7"></div>
<div class="abs" style="left:1117px;top:970.8px;width:75.4px;height:6px;border-radius:3px;background:#2563eb"></div>
<div class="abs" style="left:1117px;top:981.82px;font-size:11.5px;color:#71717a;line-height:14px;white-space:nowrap">4y exp</div>
</body>
</html>
